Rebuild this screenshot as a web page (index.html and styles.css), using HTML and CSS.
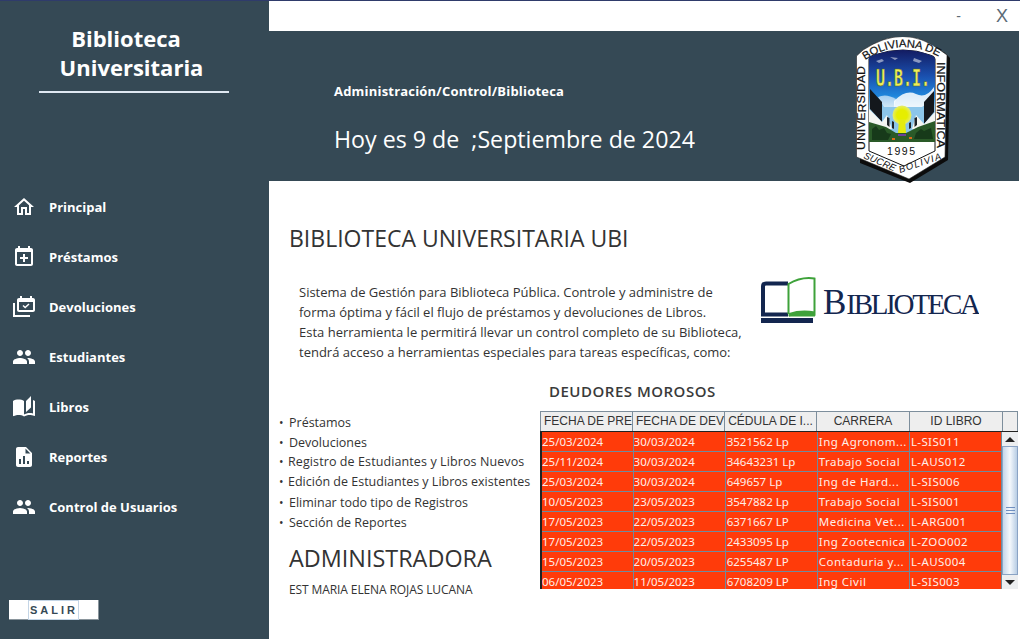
FILE: index.html
```html
<!DOCTYPE html>
<html lang="es">
<head>
    <meta charset="UTF-8">
    <title>Biblioteca Universitaria</title>
    <link rel="stylesheet" href="styles.css">
</head>
<body>
    <div class="app">
        <aside class="sidebar">
            <div class="brand">
                <p class="brand-first">Biblioteca</p>
                <p>Universitaria</p>
            </div>
            <nav class="nav">
                <a class="nav-item">
                    <svg class="nav-icon" viewBox="0 0 24 24"><path d="M12 5.69l5 4.5V18h-2v-6H9v6H7v-7.81l5-4.5M12 3L2 12h3v8h6v-6h2v6h6v-8h3L12 3z"/></svg>
                    <span>Principal</span>
                </a>
                <a class="nav-item">
                    <svg class="nav-icon" viewBox="0 0 24 24"><path d="M19 3h-1V1h-2v2H8V1H6v2H5c-1.1 0-2 .9-2 2v14c0 1.1.9 2 2 2h14c1.1 0 2-.9 2-2V5c0-1.1-.9-2-2-2zm0 16H5V7h14v12z"/><path d="M13 9h-2v3H8v2h3v3h2v-3h3v-2h-3z"/></svg>
                    <span>Préstamos</span>
                </a>
                <a class="nav-item">
                    <svg class="nav-icon" viewBox="0 0 24 24"><path d="M21 3h-1V1h-2v2h-8V1H8v2H7c-1.1 0-2 .9-2 2v10c0 1.1.9 2 2 2h14c1.1 0 2-.9 2-2V5c0-1.1-.9-2-2-2zm0 12H7V7h14v8z"/><path d="M1 8h2v12h15v2H1z"/><path d="M13.2 13.6l-2.7-2.6 1-1 1.7 1.6 3.3-3.2 1 1z"/></svg>
                    <span>Devoluciones</span>
                </a>
                <a class="nav-item">
                    <svg class="nav-icon" viewBox="0 0 24 24"><path d="M16 11c1.66 0 2.99-1.34 2.99-3S17.66 5 16 5c-1.66 0-3 1.34-3 3s1.34 3 3 3zm-8 0c1.66 0 2.99-1.34 2.99-3S9.66 5 8 5C6.34 5 5 6.34 5 8s1.34 3 3 3zm0 2c-2.33 0-7 1.17-7 3.5V19h14v-2.5c0-2.33-4.67-3.5-7-3.5zm8 0c-.29 0-.62.02-.97.05 1.16.84 1.97 1.97 1.97 3.45V19h6v-2.5c0-2.33-4.67-3.5-7-3.5z"/></svg>
                    <span>Estudiantes</span>
                </a>
                <a class="nav-item">
                    <svg class="nav-icon" viewBox="0 0 24 24"><path d="M19 1l-5 5v11l5-4.5V1zM1 6v14.65c0 .25.25.5.5.5.1 0 .15-.05.25-.05C3.1 20.45 5.05 20 6.5 20c1.95 0 4.05.4 5.5 1.5V6c-1.45-1.1-3.55-1.5-5.5-1.5S2.45 4.9 1 6zm22 13.5V6c-.6-.45-1.25-.75-2-1v13.5c-1.1-.35-2.3-.5-3.5-.5-1.7 0-4.15.65-5.5 1.5v2c1.35-.85 3.8-1.5 5.5-1.5 1.65 0 3.35.3 4.75 1.05.1.05.15.05.25.05.25 0 .5-.25.5-.5v-1.1z"/></svg>
                    <span>Libros</span>
                </a>
                <a class="nav-item">
                    <svg class="nav-icon" viewBox="0 0 24 24"><path d="M14 2H6c-1.1 0-2 .9-2 2v16c0 1.1.9 2 2 2h12c1.1 0 2-.9 2-2V8l-6-6zM9 19H7v-5h2v5zm4 0h-2v-8h2v8zm4 0h-2v-3h2v3zM13.5 8.5V3.600l4.900 4.900h-4.900z"/></svg>
                    <span>Reportes</span>
                </a>
                <a class="nav-item">
                    <svg class="nav-icon" viewBox="0 0 24 24"><path d="M16 11c1.66 0 2.99-1.34 2.99-3S17.66 5 16 5c-1.66 0-3 1.34-3 3s1.34 3 3 3zm-8 0c1.66 0 2.99-1.34 2.99-3S9.66 5 8 5C6.34 5 5 6.34 5 8s1.34 3 3 3zm0 2c-2.33 0-7 1.17-7 3.5V19h14v-2.5c0-2.33-4.67-3.5-7-3.5zm8 0c-.29 0-.62.02-.97.05 1.16.84 1.97 1.97 1.97 3.45V19h6v-2.5c0-2.33-4.67-3.5-7-3.5z"/></svg>
                    <span>Control de Usuarios</span>
                </a>
            </nav>
            <button class="exit-button"><span>SALIR</span></button>
        </aside>

        <main class="main">
            <div class="title-bar">
                <span class="window-min">-</span>
                <span class="window-close">X</span>
            </div>

            <header class="band">
                <div class="band-text">
                    <p class="band-path">Administración/Control/Biblioteca</p>
                    <p class="band-date">Hoy es 9 de  ;Septiembre de 2024</p>
                </div>
                <svg class="crest" viewBox="0 0 96 146">
                    <defs>
                        <linearGradient id="sky" x1="0" y1="0" x2="0" y2="1">
                            <stop offset="0" stop-color="#131c62"/>
                            <stop offset="0.28" stop-color="#1a4fae"/>
                            <stop offset="0.5" stop-color="#1f86dc"/>
                            <stop offset="0.62" stop-color="#8cc6ea"/>
                        </linearGradient>
                        <radialGradient id="glow">
                            <stop offset="0.55" stop-color="#e6ee00"/>
                            <stop offset="1" stop-color="#e4ec70"/>
                        </radialGradient>
                        <path id="ring-left" d="M9.500 113V20"/>
                        <path id="ring-top" d="M9 23Q49 -3 90 24"/>
                        <path id="ring-right" d="M80.500 25V122"/>
                        <path id="foot-left" d="M7 121L44 137"/>
                        <path id="foot-right" d="M44 136L92 120"/>
                    </defs>
                    <path class="crest-shadow" d="M4 22L9 16Q50 -11 89 16L94 21L92 123L54 146L4 126Z"/>
                    <path class="crest-shield" d="M0.500 19L7 13Q48 -14 84 13L91 18L89 120L53 142L0.500 120Z"/>
                    <path class="crest-line" d="M13 22Q13 19 18 18Q48 8 74 18Q79 19 79 22V114L48 129L13 114Z"/>
                    <text class="crest-text"><textPath href="#ring-left" textLength="84" lengthAdjust="spacingAndGlyphs">UNIVERSIDAD</textPath></text>
                    <text class="crest-text"><textPath href="#ring-top" textLength="78" lengthAdjust="spacingAndGlyphs">BOLIVIANA DE</textPath></text>
                    <text class="crest-text"><textPath href="#ring-right" textLength="86" lengthAdjust="spacingAndGlyphs">INFORMATICA</textPath></text>
                    <text class="crest-foot"><textPath href="#foot-left" textLength="34" lengthAdjust="spacing">SUCRE</textPath></text>
                    <text class="crest-foot"><textPath href="#foot-right" textLength="44" lengthAdjust="spacing">BOLIVIA</textPath></text>
                    <path fill="url(#sky)" d="M13 22Q13 19 18 18Q48 8 74 18Q79 19 79 22V105H13Z"/>
                    <path fill="#fff" opacity=".5" d="M20 24l6-2 2 2-5 2zM34 20l8 1-3 2zM58 21l8 3-3 2-6-2z"/>
                    <path fill="#fff" opacity=".85" d="M38 64Q50 52 60 57T78 50V62L66 70H38Z"/>
                    <path fill="#fff" opacity=".6" d="M22 60Q30 56 40 62L38 70H28Z"/>
                    <path fill="#14181c" d="M14 52L26 65V85L14 72Z"/>
                    <path fill="#14181c" d="M78 54L68 65V87L78 75Z"/>
                    <path fill="#f4f6f2" d="M13 72L26 85L31 78L36 92H13Z"/>
                    <path fill="#f4f6f2" d="M79 75L68 87L60 78L56 92H79Z"/>
                    <path fill="#1e2328" d="M31 80l2.500 1v9l-2.500-2zM61 80l-2.500 1v9l2.500-2zM36 84l2 1v7l-2-1zM55 85l-2 1v6l2-1z"/>
                    <path fill="#2a5a28" d="M13 85L30 90L40 96L50 96L62 90L79 84V105H13Z"/>
                    <path fill="#173a1a" d="M16 92l4-3 3 4 5-2 3 5 4 1-3 6H16zM60 96l5-4 3 2 7-3 2 11H58z"/>
                    <circle cx="46" cy="78" r="9.500" fill="url(#glow)"/>
                    <path fill="#e4ec10" d="M43 82H49L50 96H42Z"/>
                    <path fill="#6a3f9a" d="M42 97h8v2h-8z"/>
                    <path fill="#d86a1c" d="M36 101h3v2h-3zM53 100h3v2h-3z"/>
                    <text class="crest-ubi" x="20" y="49" textLength="54" lengthAdjust="spacingAndGlyphs">U.B.I.</text>
                    <text class="crest-year" x="31" y="118" textLength="28" lengthAdjust="spacing">1995</text>
                </svg>
            </header>

            <section class="content">
                <h2 class="content-title">BIBLIOTECA UNIVERSITARIA UBI</h2>
                <div class="intro">
                    <p class="intro-text">Sistema de Gestión para Biblioteca Pública. Controle y administre de<br>forma óptima y fácil el flujo de préstamos y devoluciones de Libros.<br>Esta herramienta le permitirá llevar un control completo de su Biblioteca,<br>tendrá acceso a herramientas especiales para tareas específicas, como:</p>
                    <svg class="logo" viewBox="0 0 218 50">
                        <path class="logo-screen" d="M27 7.500H5Q2 7.500 2 10.500V38.500H27"/>
                        <path class="logo-base" d="M0 42H52V47H0Z"/>
                        <path class="logo-book" d="M27.500 38V8Q40 .500 53.500 2.500V38.500Q38 36 27.500 39.500"/>
                        <path class="logo-foot" d="M28 37Q40 33 54 35.500V40.500H28Z"/>
                        <text class="logo-text" y="38"><tspan x="62" class="logo-cap">B</tspan><tspan class="logo-rest">IBLIOTECA</tspan></text>
                    </svg>
                </div>
                <div class="lower">
                    <div class="lower-left">
                        <ul class="feature-list">
                            <li>Préstamos</li>
                            <li>Devoluciones</li>
                            <li class="tight wide">Registro de Estudiantes y Libros Nuevos</li>
                            <li class="tight">Edición de Estudiantes y Libros existentes</li>
                            <li>Eliminar todo tipo de Registros</li>
                            <li>Sección de Reportes</li>
                        </ul>
                        <h2 class="admin-title">ADMINISTRADORA</h2>
                        <p class="admin-name">EST MARIA ELENA ROJAS LUCANA</p>
                    </div>
                    <div class="lower-right">
                        <h3 class="table-title">DEUDORES MOROSOS</h3>
                        <div class="table-box">
                            <div class="table-head">
                                <span>FECHA DE PRE</span>
                                <span>FECHA DE DEV</span>
                                <span>CÉDULA DE I...</span>
                                <span>CARRERA</span>
                                <span>ID LIBRO</span>
                                <span></span>
                            </div>
                            <div class="table-body">
                                <table class="debtors">
                                    <tr><td>25/03/2024</td><td>30/03/2024</td><td>3521562 Lp</td><td>Ing Agronom...</td><td>L-SIS011</td></tr>
                                    <tr><td>25/11/2024</td><td>30/03/2024</td><td>34643231 Lp</td><td>Trabajo Social</td><td>L-AUS012</td></tr>
                                    <tr><td>25/03/2024</td><td>30/03/2024</td><td>649657 Lp</td><td>Ing de Hard...</td><td>L-SIS006</td></tr>
                                    <tr><td>10/05/2023</td><td>23/05/2023</td><td>3547882 Lp</td><td>Trabajo Social</td><td>L-SIS001</td></tr>
                                    <tr><td>17/05/2023</td><td>22/05/2023</td><td>6371667 LP</td><td>Medicina Vet...</td><td>L-ARG001</td></tr>
                                    <tr><td>17/05/2023</td><td>22/05/2023</td><td>2433095 Lp</td><td>Ing Zootecnica</td><td>L-ZOO002</td></tr>
                                    <tr><td>15/05/2023</td><td>20/05/2023</td><td>6255487 LP</td><td>Contaduria y...</td><td>L-AUS004</td></tr>
                                    <tr><td>06/05/2023</td><td>11/05/2023</td><td>6708209 LP</td><td>Ing Civil</td><td>L-SIS003</td></tr>
                                </table>
                                <div class="scrollbar">
                                    <div class="scroll-btn"><i class="arrow-up"></i></div>
                                    <div class="scroll-thumb"><i></i></div>
                                    <div class="scroll-btn"><i class="arrow-down"></i></div>
                                </div>
                            </div>
                        </div>
                    </div>
                </div>
            </section>
        </main>
    </div>
</body>
</html>
```

FILE: styles.css
```css
body {
    margin: 0;
    font-family: "Open Sans", "Noto Sans", sans-serif;
    background-color: #fff;
    color: #333;
    overflow: hidden;
}
p, h2, h3, ul {
    margin: 0;
    padding: 0;
    font-weight: normal;
}
.app {
    display: flex;
    width: 1020px;
    height: 639px;
    box-sizing: border-box;
    border-top: 1px solid #2f3b6b;
}
.sidebar {
    width: 269px;
    flex-shrink: 0;
    background-color: #354955;
    color: #fff;
    display: flex;
    flex-direction: column;
}
.brand {
    width: 190px;
    height: 181px;
    box-sizing: border-box;
    margin-left: 39px;
    padding-top: 23px;
    font-size: 22px;
    line-height: 29px;
    text-align: center;
}
.brand p {
    padding-right: 5px;
    font-weight: 700;
}
.brand p.brand-first {
    padding-right: 16px;
}
.brand::after {
    content: "";
    display: block;
    height: 2px;
    margin-top: 9px;
    background-color: #dfe8f2;
}
.nav {
    display: flex;
    flex-direction: column;
}
.nav-item {
    display: flex;
    align-items: center;
    height: 50px;
    padding-left: 12px;
    font-size: 13px;
    font-weight: 700;
}
.nav-icon {
    width: 24px;
    height: 24px;
    margin-right: 13px;
    fill: #fff;
}
.exit-button {
    width: 90px;
    height: 20px;
    margin: 68px 0 0 9px;
    padding: 0;
    border: none;
    border-right: 1px solid #8a959c;
    border-bottom: 1px solid #8a959c;
    background-color: #fff;
    color: #354955;
    font-family: "Liberation Sans", sans-serif;
    font-size: 11px;
    font-weight: 700;
    letter-spacing: 3px;
}
.exit-button span {
    display: inline-block;
    outline: 1px solid #c4d5e6;
    padding: 2px 0 2px 1px;
    line-height: 14px;
}
.main {
    flex: 1;
    display: flex;
    flex-direction: column;
    min-width: 0;
}
.title-bar {
    height: 30px;
    flex-shrink: 0;
    display: flex;
    justify-content: flex-end;
    align-items: center;
    color: #5b6b77;
    font-family: "Liberation Sans", sans-serif;
}
.window-min {
    font-size: 14px;
    margin-right: 35px;
}
.window-close {
    font-size: 18px;
    font-weight: 400;
    margin-right: 12px;
}
.band {
    height: 150px;
    flex-shrink: 0;
    margin-right: 1px;
    background-color: #354955;
    color: #fff;
    display: flex;
    justify-content: space-between;
    align-items: flex-start;
}
.band-text {
    padding: 50px 0 0 65px;
}
.band-path {
    font-size: 13px;
    font-weight: 700;
    line-height: 20px;
    letter-spacing: .2px;
}
.band-date {
    margin-top: 23px;
    font-size: 23.200px;
    line-height: 30px;
    white-space: pre;
}
.crest {
    width: 96px;
    height: 146px;
    margin: 6px 67px 0 0;
}
.crest-shadow {
    fill: #0c0c0c;
}
.crest-shield {
    fill: #fff;
    stroke: #222;
    stroke-width: .6;
}
.crest-line {
    fill: #fff;
    stroke: #111;
    stroke-width: 1;
}
.crest-text {
    font-family: "Liberation Sans", sans-serif;
    font-size: 11px;
    stroke: #111;
    stroke-width: .2;
    fill: #111;
}
.crest-foot {
    font-family: "Liberation Sans", sans-serif;
    font-size: 9.500px;
    font-style: italic;
    fill: #111;
}
.crest-ubi {
    font-family: "DejaVu Sans Mono", monospace;
    font-size: 23px;
    font-weight: 700;
    fill: #eef05a;
    stroke: #5f6a18;
    stroke-width: .5;
}
.crest-year {
    font-family: "Liberation Sans", sans-serif;
    font-size: 10.500px;
    fill: #111;
}
.content {
    flex: 1;
    padding: 42px 2px 0 10px;
}
.content-title {
    margin-left: 10px;
    font-size: 23px;
    line-height: 30px;
    color: #333;
}
.intro {
    display: flex;
    margin-top: 29px;
    margin-left: 20px;
}
.intro-text {
    width: 462px;
    flex-shrink: 0;
    font-size: 13px;
    line-height: 20px;
    color: #333;
    white-space: nowrap;
}
.logo {
    width: 218px;
    height: 50px;
    margin-top: -6px;
}
.logo-screen {
    fill: none;
    stroke: #13264f;
    stroke-width: 4;
}
.logo-base {
    fill: #13264f;
}
.logo-book {
    fill: #fff;
    stroke: #3ea23a;
    stroke-width: 2;
}
.logo-foot {
    fill: #3ea23a;
}
.logo-text {
    font-family: "Liberation Serif", serif;
    fill: #13264f;
}
.logo-cap {
    font-size: 35px;
}
.logo-rest {
    font-size: 29px;
    letter-spacing: -2.300px;
}
.lower {
    display: flex;
    margin-top: 19px;
}
.lower-left {
    width: 261px;
    flex-shrink: 0;
    padding-top: 32px;
}
.feature-list {
    list-style: none;
    font-size: 12.500px;
    line-height: 20px;
    color: #333;
}
.feature-list li {
    white-space: nowrap;
}
.feature-list li::before {
    content: "•";
    display: inline-block;
    width: 10px;
    font-size: 12px;
}
.feature-list li.tight {
    margin-top: -1px;
    margin-bottom: 1px;
}
.feature-list li.tight::before {
    width: 9px;
}
.feature-list li.wide {
    letter-spacing: .1px;
}
.admin-title {
    margin: 10px 0 0 10px;
    font-size: 23.400px;
    line-height: 30px;
    color: #333;
}
.admin-name {
    margin: 9px 0 0 10px;
    font-size: 12px;
    line-height: 16px;
    letter-spacing: -.1px;
}
.table-title {
    margin-left: 9px;
    font-size: 15px;
    font-weight: 600;
    line-height: 20px;
    color: #3a3a3a;
    letter-spacing: .5px;
}
.table-box {
    width: 478px;
    margin-top: 10px;
}
.table-head {
    display: grid;
    grid-template-columns: 92px 92px 92px 93px 93px 16px;
    height: 21px;
    box-sizing: border-box;
    border-top: 1px solid #7d8e9c;
    border-bottom: 1px solid #222;
    background-color: #eeeeee;
    font-family: "Liberation Sans", sans-serif;
    font-size: 12px;
    color: #333;
    line-height: 19px;
    text-align: center;
}
.table-head span {
    box-sizing: border-box;
    border-left: 1px solid #7d8e9c;
    overflow: hidden;
    white-space: nowrap;
}
.table-head span:last-child {
    border-right: 1px solid #7d8e9c;
}
.table-head span:nth-child(1), .table-head span:nth-child(2) {
    padding-left: 3px;
    text-align: left;
}
.table-body {
    display: flex;
    height: 157px;
    overflow: hidden;
    box-shadow: inset 0 -1px 0 #8a9aa6;
}
.debtors {
    width: 462px;
    height: 160px;
    flex-shrink: 0;
    table-layout: fixed;
    border-collapse: collapse;
    border-left: 2px solid #222;
    border-right: 1px solid #222;
    background-color: #ff3b0a;
    color: #ffeee8;
    font-family: "Noto Sans", sans-serif;
    font-size: 11.500px;
}
.debtors td {
    height: 19px;
    padding: 0 1px;
    border-right: 1px solid #6f8a9c;
    border-bottom: 1px solid #6f8a9c;
    white-space: nowrap;
    overflow: hidden;
    line-height: 16px;
}
.debtors td:nth-child(-n+2) {
    padding-left: 0;
}
.debtors td:nth-child(4) {
    letter-spacing: .5px;
}
.debtors td:nth-child(5) {
    letter-spacing: .4px;
}
.scrollbar {
    width: 16px;
    height: 157px;
    display: flex;
    flex-direction: column;
    background-color: #eef1f4;
}
.scroll-btn {
    height: 14px;
    flex-shrink: 0;
    display: flex;
    justify-content: center;
    align-items: center;
    background-color: #eceef0;
}
.scroll-btn i {
    width: 0;
    height: 0;
    border-left: 5px solid transparent;
    border-right: 5px solid transparent;
}
.arrow-up {
    border-bottom: 5px solid #222;
}
.arrow-down {
    border-top: 5px solid #222;
}
.scroll-thumb {
    flex: 1;
    display: flex;
    align-items: center;
    justify-content: center;
    box-sizing: border-box;
    border: 1px solid #8aa3c4;
    background: linear-gradient(to right, #c5d6ea, #f4f8fc 50%, #b8cde4);
}
.scroll-thumb i {
    width: 9px;
    height: 5px;
    border-top: 1px solid #6f8fc0;
    border-bottom: 1px solid #6f8fc0;
    background: linear-gradient(#6f8fc0, #6f8fc0) center / 100% 1px no-repeat;
}
```
